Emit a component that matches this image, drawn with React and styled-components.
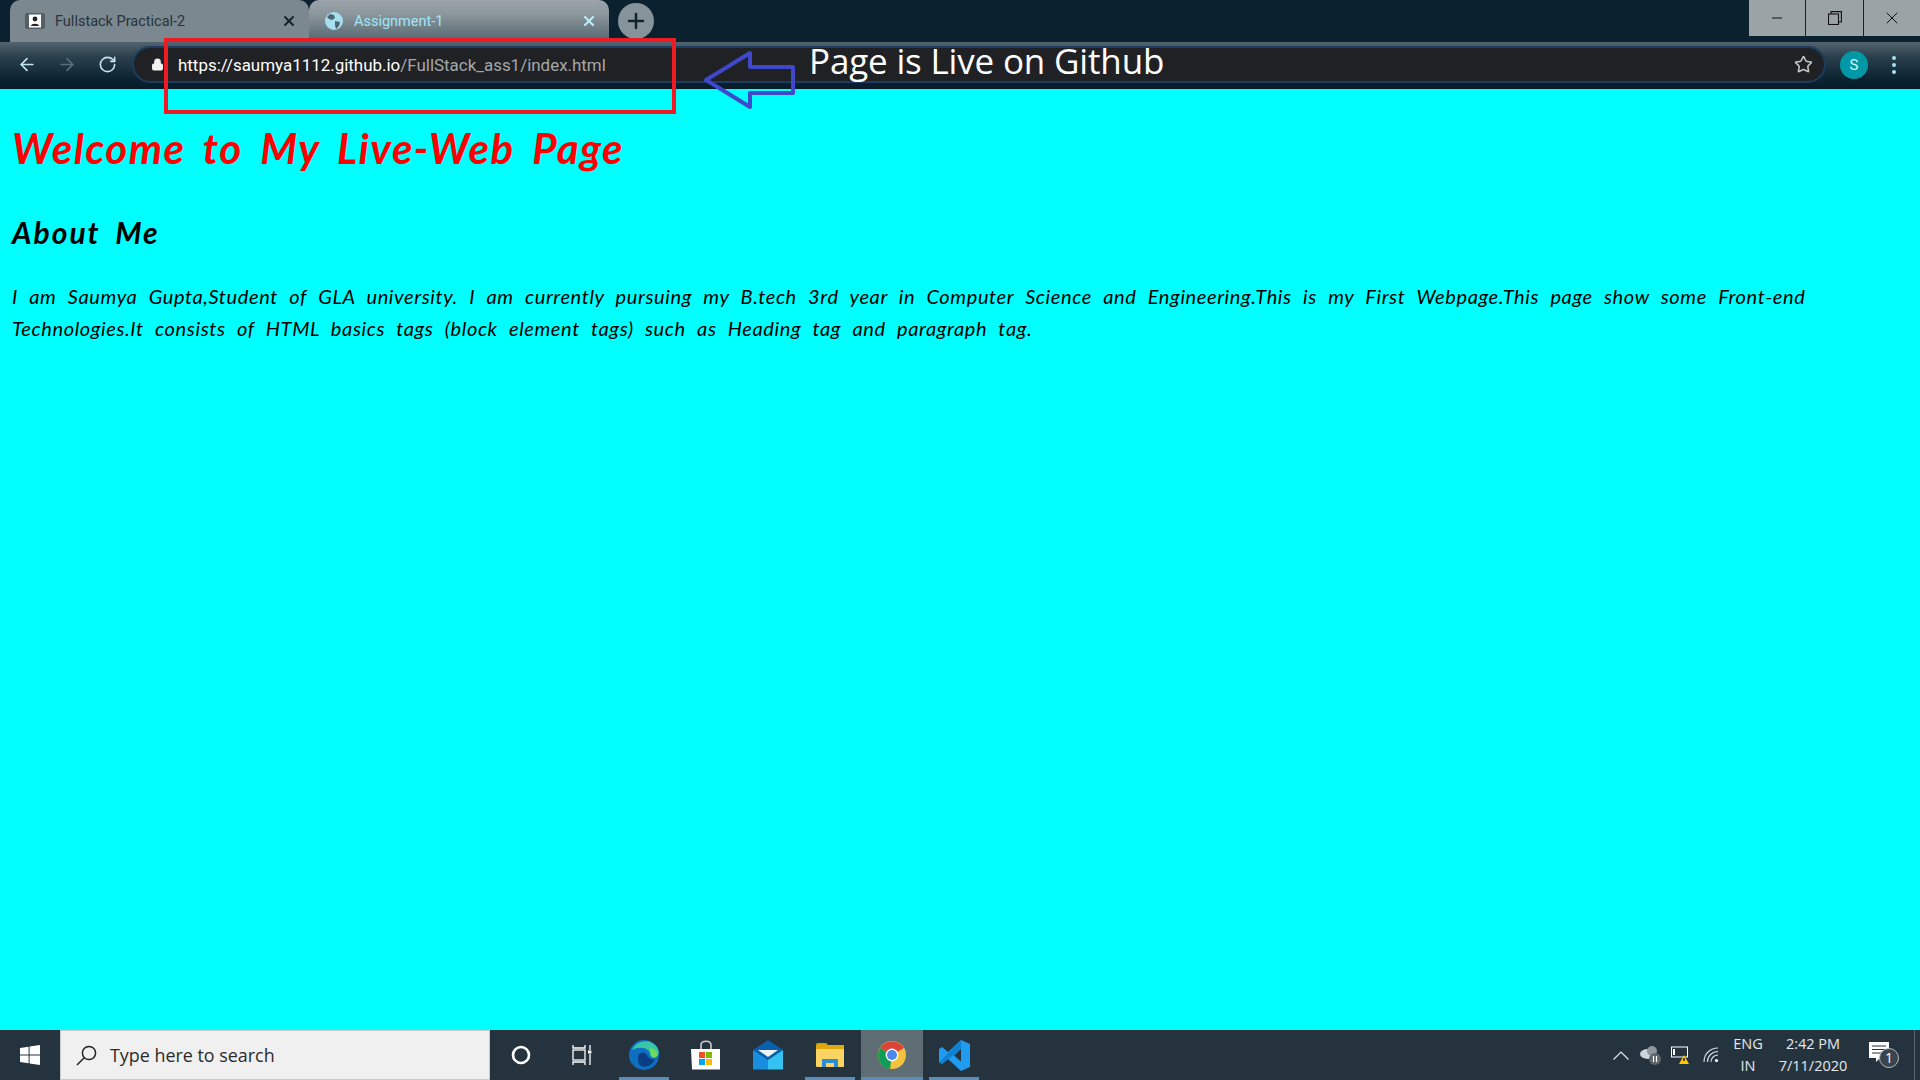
import styled, { createGlobalStyle } from "styled-components";
import { ArrowLeft, ArrowRight, RotateCw, Star, X, Minus, Plus, Lock } from "lucide-react";

const Global = createGlobalStyle`
  html, body { margin: 0; padding: 0; height: 100%; overflow: hidden; }
  * { box-sizing: border-box; }
  body { font-family: "Roboto", "Liberation Sans", sans-serif; }
`;

const Screen = styled.div`
  position: relative;
  display: flex;
  flex-direction: column;
  width: 1920px;
  height: 1080px;
  overflow: hidden;
`;

const TabStrip = styled.div`
  display: flex;
  align-items: flex-start;
  height: 42px;
  padding-left: 10px;
  background: #0b2130;
`;

const Tab = styled.div`
  display: flex;
  align-items: center;
  width: ${(p) => (p.$active ? 300 : 299)}px;
  height: 42px;
  padding: 0 12px 0 ${(p) => (p.$active ? 16 : 15)}px;
  border-radius: 10px 10px 0 0;
  background: ${(p) =>
    p.$active ? "linear-gradient(#9ba4ab, #8b959c 35%, #53656e)" : "#7c888f"};
  color: ${(p) => (p.$active ? "#9fe6f8" : "#25343d")};
  font-size: 14.5px;
`;

const TabTitle = styled.span`
  flex: 1;
  margin-left: ${(p) => (p.$wide ? 11 : 10)}px;
`;

const NewTab = styled.div`
  display: flex;
  align-items: center;
  justify-content: center;
  width: 36px;
  height: 36px;
  margin: 3px 0 0 9px;
  border-radius: 50%;
  background: #87939a;
  color: #12252f;
`;

const WindowControls = styled.div`
  display: flex;
  margin-left: auto;
  height: 36px;
`;

const WinButton = styled.div`
  display: flex;
  align-items: center;
  justify-content: center;
  width: ${(p) => p.$w}px;
  background: #9aa3a6;
  border-left: ${(p) => (p.$first ? "0" : "1px solid #16262f")};
  color: #111;
`;

const Toolbar = styled.div`
  display: flex;
  align-items: center;
  height: 47px;
  padding: 0 0 2px 17px;
  background: linear-gradient(#52656f, #2c414e 30%, #0b2230 80%, #081c29);
`;

const NavButton = styled.div`
  display: flex;
  align-items: center;
  justify-content: center;
  width: 20px;
  margin-right: ${(p) => (p.$last ? 14 : 20)}px;
  color: ${(p) => (p.$off ? "#55707d" : "#c3e6f0")};
`;

const Omnibox = styled.div`
  display: flex;
  align-items: center;
  width: 1694px;
  height: 37px;
  margin-left: 1px;
  padding: 0 11px 0 17px;
  border: 2px solid #1d3c61;
  border-radius: 19px;
  background: #202124;
  color: #a5a8ab;
  font-size: 16.95px;
`;

const UrlHost = styled.span`
  color: #fff;
`;

const UrlText = styled.div`
  flex: 1;
  margin-left: 14px;
  white-space: nowrap;
`;

const Avatar = styled.div`
  display: flex;
  align-items: center;
  justify-content: center;
  width: 28px;
  height: 28px;
  margin-left: 14px;
  border-radius: 50%;
  background: #0097a7;
  color: #d8f6fa;
  font-size: 15px;
`;

const MenuDots = styled.div`
  display: flex;
  flex-direction: column;
  gap: 3px;
  margin-left: 24px;
`;

const Dot = styled.span`
  width: 4px;
  height: 4px;
  border-radius: 50%;
  background: #a5e2f2;
`;

const Page = styled.main`
  flex: 1;
  padding: 0 12px;
  background: #00ffff;
  font-family: "Lato", sans-serif;
  font-style: italic;
  color: #000;
`;

const Heading = styled.h1`
  margin: 29px 0 0;
  color: #ff0000;
  font-size: 42px;
  line-height: 60px;
  font-weight: 700;
  letter-spacing: 1.45px;
  word-spacing: 7px;
`;

const SubHeading = styled.h2`
  margin: 34px 0 0;
  font-size: 30px;
  line-height: 40px;
  font-weight: 700;
  letter-spacing: 2px;
  word-spacing: 6px;
`;

const Para = styled.p`
  width: 1830px;
  margin: 28px 0 0;
  font-size: 20px;
  line-height: 32px;
  letter-spacing: 0.62px;
  word-spacing: 6px;
`;

const Taskbar = styled.footer`
  display: flex;
  align-items: center;
  height: 50px;
  background: #25333e;
`;

const StartSlot = styled.div`
  display: flex;
  align-items: center;
  justify-content: center;
  width: 60px;
  height: 50px;
`;

const SearchBox = styled.div`
  display: flex;
  align-items: center;
  width: 430px;
  height: 50px;
  padding-left: 15px;
  border: 1px solid #c9c9c9;
  background: #f0f0f0;
  color: #2b2b2b;
  font-family: "Open Sans", sans-serif;
  font-size: 17.9px;
`;

const SearchLabel = styled.span`
  margin-left: 13px;
`;

const AppSlot = styled.div`
  position: relative;
  display: flex;
  align-items: center;
  justify-content: center;
  width: ${(p) => p.$w || 62}px;
  height: 50px;
  background: ${(p) => (p.$active ? "#5f6d75" : "transparent")};
  &::after {
    content: "";
    display: ${(p) => (p.$open ? "block" : "none")};
    position: absolute;
    left: ${(p) => (p.$active ? 0 : 6)}px;
    right: ${(p) => (p.$active ? 0 : 6)}px;
    bottom: 0;
    height: 3px;
    background: #5a8db8;
  }
`;

const Tray = styled.div`
  display: flex;
  align-items: center;
  height: 50px;
  margin-left: auto;
  color: #e6e9eb;
  font-family: "Open Sans", sans-serif;
  font-size: 14.5px;
`;

const TraySlot = styled.div`
  display: flex;
  align-items: center;
  justify-content: center;
  width: ${(p) => p.$w}px;
`;

const TrayText = styled.div`
  display: flex;
  flex-direction: column;
  align-items: center;
  justify-content: center;
  gap: 4px;
  width: ${(p) => p.$w}px;
  line-height: 18px;
`;

const ShowDesktop = styled.div`
  width: 6px;
  height: 50px;
  border-left: 1px solid #59656e;
`;

const RedBox = styled.div`
  position: absolute;
  left: 164px;
  top: 38px;
  width: 512px;
  height: 76px;
  border: 4px solid #ed1c24;
`;

const ArrowMark = styled.svg`
  position: absolute;
  left: 701px;
  top: 50px;
`;

const Note = styled.div`
  position: absolute;
  left: 809px;
  top: 36px;
  color: #fff;
  font-family: "Open Sans", sans-serif;
  font-size: 35px;
  line-height: 50px;
  letter-spacing: -0.17px;
  white-space: nowrap;
`;

const Restore = () => (
  <svg width="14" height="14" viewBox="0 0 14 14" fill="none" stroke="#111" strokeWidth="1.1">
    <rect x="0.5" y="3" width="10" height="10.5" />
    <path d="M3 3V.6h10.4v10.4H10.5" />
  </svg>
);

const TabFavicon = () => (
  <svg width="20" height="16" viewBox="0 0 20 16">
    <rect width="20" height="16" rx="2" fill="#555f66" />
    <rect x="4" y="1.5" width="12" height="13" fill="#fff" />
    <circle cx="10" cy="6" r="2.4" fill="#222" />
    <path d="M6 13c0-3 8-3 8 0z" fill="#222" />
  </svg>
);

const Globe = () => (
  <svg width="18" height="18" viewBox="0 0 18 18">
    <circle cx="9" cy="9" r="9" fill="#a5dff0" />
    <path d="M5 2l4 1 1 3-3 2-3-1-2-2zM10 9l5 1-1 4-3 3-1-4z" fill="#4e6570" />
  </svg>
);

const WinLogo = () => (
  <svg width="20" height="20" viewBox="0 0 20 20" fill="#fff">
    <path d="M0 3l8.6-1.2v7.7H0zM9.6 1.6L20 0v9.5H9.6zM0 10.5h8.6v7.7L0 17zM9.6 10.5H20V20L9.6 18.4z" />
  </svg>
);

const SearchGlass = () => (
  <svg width="21" height="21" viewBox="0 0 21 21" fill="none" stroke="#222" strokeWidth="1.5">
    <circle cx="13" cy="8" r="6.6" />
    <path d="M8.2 12.8L1 20" />
  </svg>
);

const Cortana = () => (
  <svg width="20" height="20" viewBox="0 0 20 20" fill="none" stroke="#fff" strokeWidth="2.6">
    <circle cx="10" cy="10" r="8" />
  </svg>
);

const TaskView = () => (
  <svg width="20" height="20" viewBox="0 0 20 20" fill="none" stroke="#fff" strokeWidth="1.3">
    <rect x="1" y="5" width="12" height="10" />
    <path d="M1 0v3h12V0M1 20v-3h12v3M18 0v5M18 9v11" />
    <rect x="16" y="5.5" width="3.4" height="3" fill="#fff" stroke="none" />
  </svg>
);

const Edge = () => (
  <svg width="30" height="30" viewBox="0 0 30 30">
    <circle cx="15" cy="15" r="15" fill="#0f6fc0" />
    <path d="M3 10C7 0 22-2 28 7c3 5 2 9-1 10-4 1-6-1-6-3 0-5-9-9-18-4z" fill="#37c6a8" />
    <path d="M21 8c5 0 8 4 7 8-1 2-5 2-6 0z" fill="#6fdc5e" />
    <path d="M9 17c0-5 7-6 9-2 1 3 4 5 8 4-3 8-13 10-16 5-1-2-1-5-1-7z" fill="#0b3f85" />
  </svg>
);

const Store = () => (
  <svg width="30" height="30" viewBox="0 0 30 30">
    <path d="M10 9V5c0-5 10-5 10 0v4" fill="none" stroke="#c9ccce" strokeWidth="1.6" />
    <path d="M0 9h29v20.5H1z" fill="#fff" />
    <rect x="8" y="12" width="6" height="6" fill="#f25022" />
    <rect x="15" y="12" width="6" height="6" fill="#7fba00" />
    <rect x="8" y="19" width="6" height="6" fill="#00a4ef" />
    <rect x="15" y="19" width="6" height="6" fill="#ffb900" />
  </svg>
);

const Mail = () => (
  <svg width="30" height="30" viewBox="0 0 30 30">
    <path d="M0 10L15 0l15 10-15 10z" fill="#0a5fae" />
    <path d="M5 10h20l-10 7z" fill="#eef3f6" />
    <path d="M0 10l15 10v9.500H0z" fill="#1a8ede" />
    <path d="M30 10L15 20v9.500h15z" fill="#35c2f3" />
  </svg>
);

const Folder = () => (
  <svg width="28" height="26" viewBox="0 0 28 26">
    <path d="M0 3a2 2 0 012-2h8l3 3h-13z" fill="#d99f07" />
    <rect y="3" width="28" height="5" fill="#e0a80f" />
    <rect y="7" width="28" height="18" rx="1" fill="#fcd462" />
    <path d="M6 25v-8h16v8h-4v-4h-8v4z" fill="#2b8fd8" />
  </svg>
);

const Chrome = () => (
  <svg width="28" height="28" viewBox="0 0 28 28">
    <circle cx="14" cy="14" r="14" fill="#f3c33d" />
    <path d="M14 14L2 7A14 14 0 0126 7z" fill="#dc4437" />
    <path d="M14 14L2 7a14 14 0 0010 21z" fill="#109c58" />
    <circle cx="14" cy="14" r="6.400" fill="#fff" />
    <circle cx="14" cy="14" r="5" fill="#4b86ed" />
  </svg>
);

const VsCode = () => (
  <svg width="31" height="31" viewBox="0 0 31 31">
    <path d="M22 0l9 4v23l-9 4-13-12-6 5-3-2v-13l3-2 6 5zM22 9l-7 6.500 7 6z" fill="#1f9cf0" />
    <path d="M22 0v9l-13 10.500-6 5-3-2z" fill="#0a75c2" opacity="0.7" />
  </svg>
);

const TrayChevron = () => (
  <svg width="16" height="9" viewBox="0 0 16 9" fill="none" stroke="#e6e9eb" strokeWidth="1.2">
    <path d="M.5 8.500L8 1l7.500 7.500" />
  </svg>
);

const TrayCloud = () => (
  <svg width="22" height="20" viewBox="0 0 22 20">
    <ellipse cx="8" cy="9" rx="8" ry="5" fill="#cfd5d9" />
    <circle cx="12" cy="6" r="5" fill="#8e989e" />
    <circle cx="15" cy="14" r="6" fill="#5f666b" />
    <path d="M13.500 11v6M16.500 11v6" stroke="#fff" strokeWidth="1.200" />
  </svg>
);

const TrayBattery = () => (
  <svg width="20" height="20" viewBox="0 0 20 20">
    <rect x="0.500" y="2" width="16" height="10" fill="none" stroke="#fff" />
    <rect x="2" y="4" width="2" height="6" fill="#fff" />
    <path d="M13 19l5-9 5 9z" transform="translate(-5 0)" fill="#ffc600" />
    <path d="M13 13v3" stroke="#000" strokeWidth="1.300" />
  </svg>
);

const TrayWifi = () => (
  <svg width="16" height="16" viewBox="0 0 16 16" fill="none" stroke="#d8dde0" strokeWidth="1.100">
    <path d="M1 15C1 7 7 1 15 1M4.500 15c0-6 4.500-10.500 10.500-10.500M8 15c0-4 3-7 7-7" />
    <circle cx="13.500" cy="13.500" r="1.600" fill="#fff" stroke="none" />
  </svg>
);

const TrayNotes = () => (
  <svg width="32" height="26" viewBox="0 0 32 26">
    <path d="M0 0h20v16h-9l-4 4v-4H0z" fill="#fff" />
    <path d="M3 4h14M3 7.500h14M3 11h10" stroke="#25333e" strokeWidth="1.100" />
    <circle cx="20" cy="16" r="9.500" fill="#3a444c" stroke="#b6bcc0" strokeWidth="1" />
    <text x="20" y="21" textAnchor="middle" fontSize="14" fill="#fff" fontFamily="Open Sans">1</text>
  </svg>
);

export default function App() {
  return (
    <Screen>
      <Global />
      <TabStrip>
        <Tab>
          <TabFavicon />
          <TabTitle>Fullstack Practical-2</TabTitle>
          <X size={16} strokeWidth={3} color="#15252e" />
        </Tab>
        <Tab $active>
          <Globe />
          <TabTitle $wide>Assignment-1</TabTitle>
          <X size={16} strokeWidth={3} color="#bdeffa" />
        </Tab>
        <NewTab>
          <Plus size={24} strokeWidth={2.5} />
        </NewTab>
        <WindowControls>
          <WinButton $w={56} $first>
            <Minus size={16} strokeWidth={1.5} />
          </WinButton>
          <WinButton $w={58}>
            <Restore />
          </WinButton>
          <WinButton $w={57}>
            <X size={20} strokeWidth={1.2} />
          </WinButton>
        </WindowControls>
      </TabStrip>

      <Toolbar>
        <NavButton>
          <ArrowLeft size={21} />
        </NavButton>
        <NavButton $off>
          <ArrowRight size={21} />
        </NavButton>
        <NavButton $last>
          <RotateCw size={19} />
        </NavButton>
        <Omnibox>
          <Lock size={13} fill="#f2f2f2" color="#f2f2f2" />
          <UrlText>
            <UrlHost>https://saumya1112.github.io</UrlHost>/FullStack_ass1/index.html
          </UrlText>
          <Star size={19} color="#c6c6c6" strokeWidth={2} />
        </Omnibox>
        <Avatar>S</Avatar>
        <MenuDots>
          <Dot />
          <Dot />
          <Dot />
        </MenuDots>
      </Toolbar>

      <Page>
        <Heading>Welcome to My Live-Web Page</Heading>
        <SubHeading>About Me</SubHeading>
        <Para>
          I am Saumya Gupta,Student of GLA university. I am currently pursuing my B.tech 3rd year in
          Computer Science and Engineering.This is my First Webpage.This page show some Front-end
          Technologies.It consists of HTML basics tags (block element tags) such as Heading tag and
          paragraph tag.
        </Para>
      </Page>

      <Taskbar>
        <StartSlot>
          <WinLogo />
        </StartSlot>
        <SearchBox>
          <SearchGlass />
          <SearchLabel>Type here to search</SearchLabel>
        </SearchBox>
        <AppSlot $w={61}>
          <Cortana />
        </AppSlot>
        <AppSlot>
          <TaskView />
        </AppSlot>
        <AppSlot $open>
          <Edge />
        </AppSlot>
        <AppSlot>
          <Store />
        </AppSlot>
        <AppSlot>
          <Mail />
        </AppSlot>
        <AppSlot $open>
          <Folder />
        </AppSlot>
        <AppSlot $open $active>
          <Chrome />
        </AppSlot>
        <AppSlot $open>
          <VsCode />
        </AppSlot>
        <Tray>
          <TraySlot $w={32}>
            <TrayChevron />
          </TraySlot>
          <TraySlot $w={28}>
            <TrayCloud />
          </TraySlot>
          <TraySlot $w={32}>
            <TrayBattery />
          </TraySlot>
          <TraySlot $w={28}>
            <TrayWifi />
          </TraySlot>
          <TrayText $w={46}>
            <span>ENG</span>
            <span>IN</span>
          </TrayText>
          <TrayText $w={84}>
            <span>2:42 PM</span>
            <span>7/11/2020</span>
          </TrayText>
          <TraySlot $w={59}>
            <TrayNotes />
          </TraySlot>
          <ShowDesktop />
        </Tray>
      </Taskbar>

      <RedBox />
      <ArrowMark width="100" height="64" viewBox="0 0 100 64" fill="none">
        <path d="M5 30L49 3v14h43v26H49v14z" stroke="#3f48cc" strokeWidth="4" strokeLinejoin="round" />
      </ArrowMark>
      <Note>Page is Live on Github</Note>
    </Screen>
  );
}
